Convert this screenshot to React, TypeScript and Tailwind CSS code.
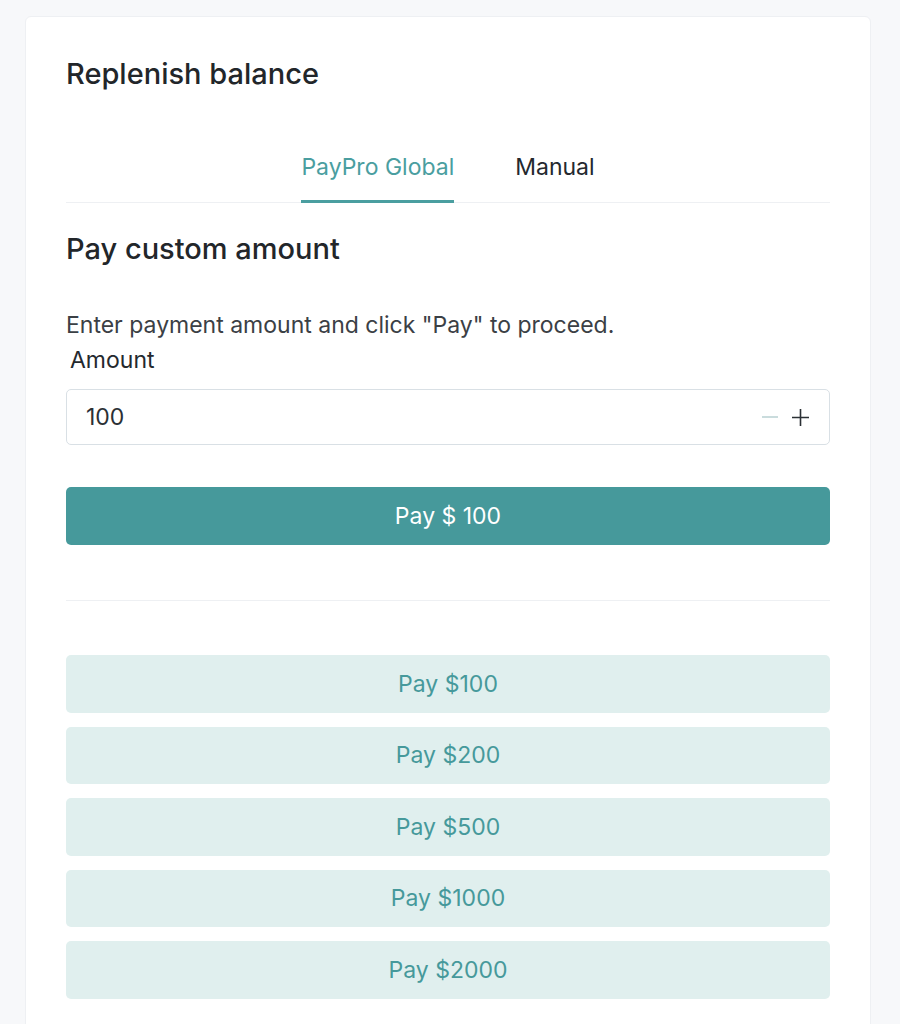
import { useState } from "react"

const presets = [100, 200, 500, 1000, 2000]

function Tabs({ active, onChange }: { active: string; onChange: (t: string) => void }) {
  const tabs = ["PayPro Global", "Manual"]
  return (
    <div className="mt-[61px] flex justify-center gap-[61px] border-b border-[#eef0f3]">
      {tabs.map((t) => (
        <button
          key={t}
          onClick={() => onChange(t)}
          className={
            t === active
              ? "-mb-px border-b-[3px] border-[#4a9ea0] pb-[18px] text-[23px] leading-[30px] text-[#4a9ea0]"
              : "-mb-px border-b-[3px] border-transparent pb-[18px] text-[23px] leading-[30px] text-[#24292e]"
          }
        >
          {t}
        </button>
      ))}
    </div>
  )
}

export default function App() {
  const [tab, setTab] = useState("PayPro Global")
  const [amount, setAmount] = useState(100)

  return (
    <div
      className="min-h-screen bg-[#f7f8fa] pt-4 pl-[25px] pr-[29px]"
      style={{ fontFamily: "Inter, 'Noto Sans', sans-serif" }}
    >
      <div className="min-h-[1100px] rounded-md border border-[#eef0f3] bg-white px-[40px] pt-[40px]">
        <h1 className="text-[29px] font-medium leading-[34px] text-[#22262a]">Replenish balance</h1>

        <Tabs active={tab} onChange={setTab} />

        <h2 className="mt-[29px] text-[29px] font-medium leading-[34px] text-[#22262a]">Pay custom amount</h2>

        <p className="mt-[44px] text-[23px] leading-[30px] text-[#3b4045]">
          Enter payment amount and click "Pay" to proceed.
        </p>
        <label className="mt-[5px] block pl-1 text-[23px] leading-[30px] text-[#24292e]">Amount</label>

        <div className="mt-[14px] flex h-[56px] items-center rounded-[5px] border border-[#d9e0e5] pl-[19px] pr-[19px]">
          <input
            value={amount}
            onChange={(e) => setAmount(Number(e.target.value) || 0)}
            className="flex-1 bg-transparent text-[23px] text-[#2b3035] outline-none"
          />
          <button onClick={() => setAmount(Math.max(0, amount - 1))} className="mr-[12px] flex items-center">
            <svg width="18" height="18" viewBox="0 0 18 18">
              <path d="M1 9h16" stroke="#b9d0d2" strokeWidth="1.5" />
            </svg>
          </button>
          <button onClick={() => setAmount(amount + 1)} className="flex items-center">
            <svg width="19" height="19" viewBox="0 0 19 19">
              <path d="M1 9.5h17M9.5 1v17" stroke="#2b3035" strokeWidth="1.6" />
            </svg>
          </button>
        </div>

        <button className="mt-[42px] h-[58px] w-full rounded-[5px] bg-[#46999b] text-[23px] text-white">
          Pay $ {amount}
        </button>

        <div className="mt-[55px] h-px bg-[#eef0f3]" />

        <div className="mt-[54px] flex flex-col gap-[14px]">
          {presets.map((p) => (
            <button
              key={p}
              onClick={() => setAmount(p)}
              className="h-[57.5px] w-full rounded-[5px] bg-[#e0efee] text-[23px] text-[#46999b]"
            >
              Pay ${p}
            </button>
          ))}
        </div>
      </div>
    </div>
  )
}
